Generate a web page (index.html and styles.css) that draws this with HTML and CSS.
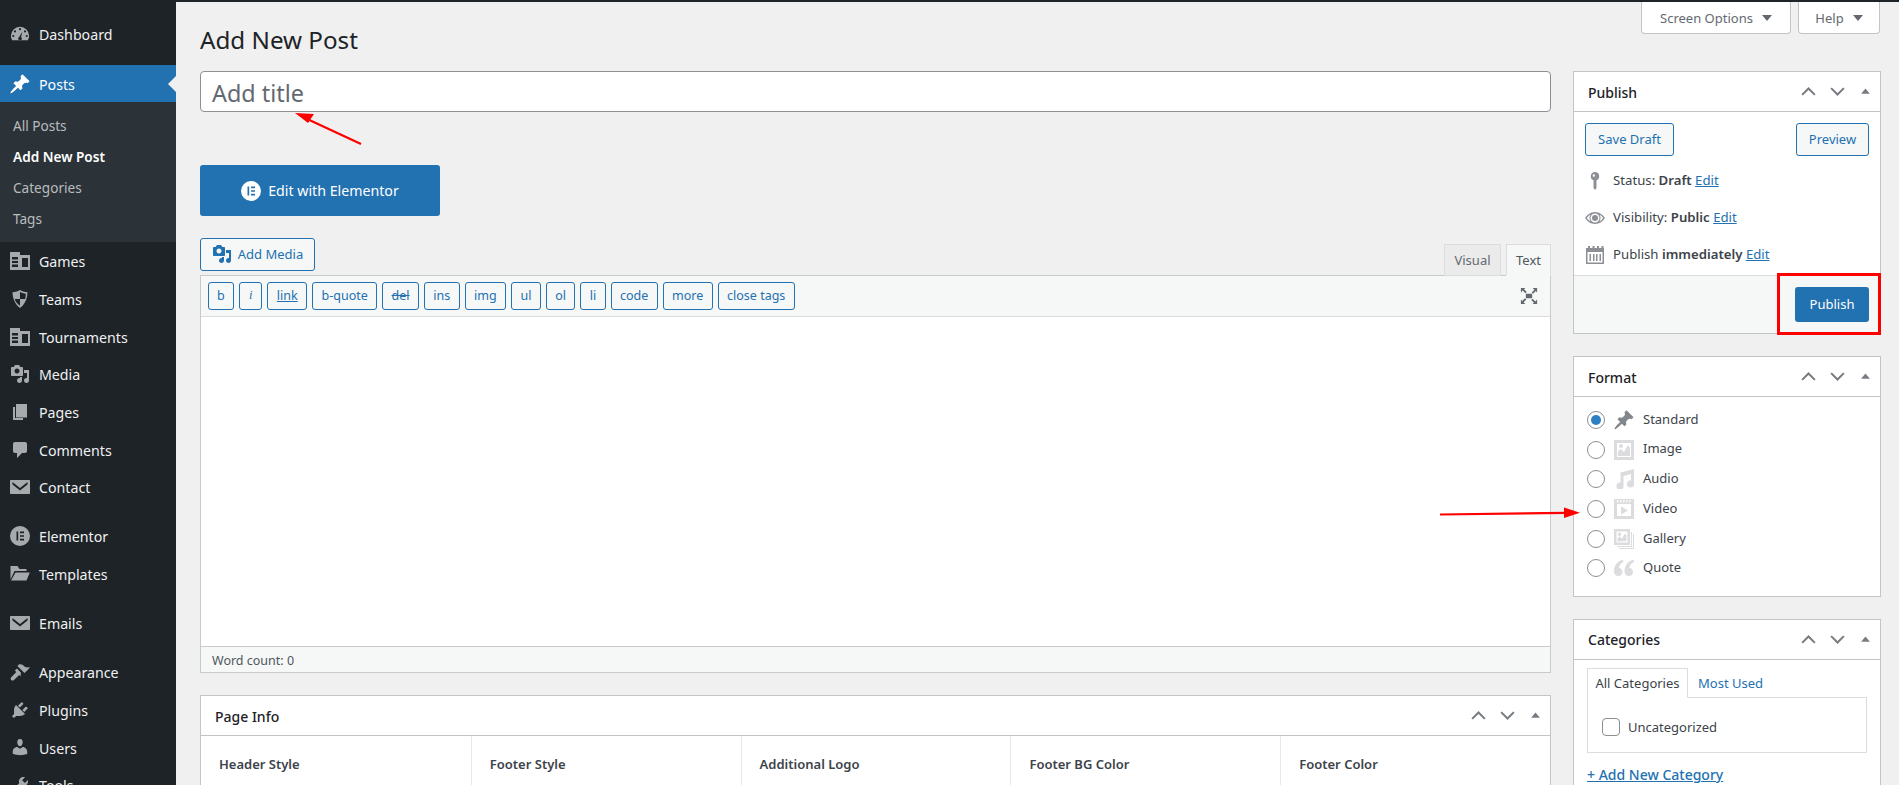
FILE: index.html
```html
<!DOCTYPE html>
<html lang="en">
<head>
<meta charset="utf-8">
<title>Add New Post</title>
<link rel="stylesheet" href="styles.css">
</head>
<body>
<svg class="defs" width="0" height="0" aria-hidden="true">
  <symbol id="i-dash" viewBox="-1 0 22 20"><path fill-rule="evenodd" d="M10 2a10 10 0 0 0-10 10c0 2 .6 3.700 1.500 5h17c.9-1.300 1.500-3 1.500-5A10 10 0 0 0 10 2zM10 3.500a1.200 1.200 0 1 1 0 2.400a1.200 1.200 0 0 1 0-2.400zM4.500 6a1.200 1.200 0 1 1 0 2.400a1.200 1.200 0 0 1 0-2.400zM2.600 11a1.200 1.200 0 1 1 0 2.400a1.200 1.200 0 0 1 0-2.400zM17.400 11a1.200 1.200 0 1 1 0 2.400a1.200 1.200 0 0 1 0-2.400zM15.500 6a1.200 1.200 0 1 1 0 2.400a1.200 1.200 0 0 1 0-2.400zM12.600 7.500l-1.400 6a2 2 0 1 1-2.100-.1z"/></symbol>
  <symbol id="i-pin" viewBox="1 1 18 18"><path d="M10.440 3.020l1.820-1.820 6.360 6.350-1.830 1.820c-1.050-.68-2.480-.57-3.410.36l-.75.75c-.92.93-1.040 2.350-.35 3.410l-1.830 1.820-2.410-2.410-2.800 2.790c-.42.42-3.380 2.710-3.800 2.290s1.860-3.390 2.280-3.810l2.790-2.790L4.100 9.360l1.830-1.820c1.050.69 2.480.57 3.400-.36l.75-.75c.93-.92 1.050-2.350.36-3.410z"/></symbol>
  <symbol id="i-news" viewBox="0 0 20 20"><path fill-rule="evenodd" d="M0 1h10v3h10v15H0zM2 6v2.500h6V6zM2 10v2h6v-2zM2 13.500V16h6v-2.500zM12 7v9h6V7z"/></symbol>
  <symbol id="i-shield" viewBox="0 0 20 20"><path d="M10 1s3 2 7.500 2.200C17.500 14 10 19 10 19S2.500 14 2.500 3.200C7 3 10 1 10 1zm0 9H4.800c.6 2.800 2.500 5 5.200 6.800V10zm0 0h5.200c.4-1.600.6-3.200.6-5.300C13.500 4.500 11.500 3.800 10 3v7z"/></symbol>
  <symbol id="i-media" viewBox="0 0 20 20"><path d="M13 11V4c0-.55-.45-1-1-1h-1.670L9 1H5L3.670 3H2c-.55 0-1 .45-1 1v7c0 .55.45 1 1 1h10c.55 0 1-.45 1-1zM7 4.500c1.380 0 2.500 1.120 2.500 2.500S8.380 9.500 7 9.500 4.500 8.380 4.500 7 5.620 4.500 7 4.500zM14 6h5v10.500c0 1.380-1.120 2.500-2.500 2.500S14 17.880 14 16.500s1.120-2.500 2.500-2.500c.17 0 .34.02.5.05V9h-3V6zm-4 8.050V13h2v3.500c0 1.380-1.120 2.500-2.500 2.500S7 17.880 7 16.500 8.120 14 9.500 14c.17 0 .34.02.5.05z"/></symbol>
  <symbol id="i-pages" viewBox="0 0 20 20"><path d="M6 15V2h11v13.500H6zm-1 1h8v2H3V5h2v11z"/></symbol>
  <symbol id="i-comment" viewBox="0 0 20 20"><path d="M5 2h10c1.100 0 2 .9 2 2v7c0 1.100-.9 2-2 2h-3l-5 5v-5H5c-1.100 0-2-.9-2-2V4c0-1.100.9-2 2-2z"/></symbol>
  <symbol id="i-mail" viewBox="0 0 20 20"><path fill-rule="evenodd" d="M1 3h18c.5 0 1 .4 1 1v12c0 .6-.5 1-1 1H1c-.5 0-1-.4-1-1V4c0-.6.5-1 1-1zM2.500 5 10 11l7.500-6v2.500L10 13.500 2.500 7.500z"/></symbol>
  <symbol id="i-el" viewBox="0 0 20 20"><path fill-rule="evenodd" d="M10 0a10 10 0 1 0 0 20a10 10 0 0 0 0-20zM6.500 5.500h1.700v9H6.500zM10 5.500h4v1.700h-4zM10 9.150h4v1.700h-4zM10 12.800h4v1.700h-4z"/></symbol>
  <symbol id="i-folder" viewBox="0 0 20 20"><path d="M.5 15.500V2h7l2 3h7v2H4.500zM5.500 8.500h14.300l-3.300 8H1z"/></symbol>
  <symbol id="i-brush" viewBox="0 0 20 20"><path d="M14.480 11.060L7.410 3.990l1.500-1.500c.5-.56 2.300-.47 3.590.32 1.280.79 1.830 1.910 3 2.300 1.400.5 3.200.4 4.300-.4-.5 2-2.800 3.800-3.800 4.850zM10.830 10.420l-3.900-3.900-2.100 2.100 1.500 1.500-5.100 5.100c-.8.8-.8 2 0 2.800s2 .8 2.800 0l5.100-5.100 1.500 1.500z"/></symbol>
  <symbol id="i-plug" viewBox="0 0 20 20"><path d="M13.110 4.360L9.870 7.600 8 5.730l3.240-3.240c.35-.34 1.050-.2 1.560.32.52.51.66 1.210.31 1.550zm-8 1.770l.91-1.120 9.010 9.010-1.190.84c-.71.71-2.630 1.160-3.820 1.160H6.140L4.900 17.260c-.59.59-1.540.59-2.120 0-.59-.58-.59-1.530 0-2.120l1.240-1.240v-3.880c0-1.130.4-3.190 1.090-3.890zm7.260 3.970l3.240-3.240c.34-.35 1.040-.21 1.550.31.52.51.66 1.210.31 1.550l-3.240 3.250z"/></symbol>
  <symbol id="i-user" viewBox="0 0 20 20"><path d="M10 9.250c-2.270 0-2.730-3.440-2.730-3.440C7 4.020 7.820 2 9.970 2c2.160 0 2.980 2.020 2.710 3.810 0 0-.41 3.440-2.680 3.440zm0 2.570L12.720 10c2.390 0 4.520 2.330 4.520 4.530v2.490s-3.650 1.130-7.240 1.130c-3.650 0-7.240-1.130-7.240-1.130v-2.490c0-2.250 1.940-4.480 4.470-4.480z"/></symbol>
  <symbol id="i-tool" viewBox="0 0 20 20"><path d="M16.680 9.770c-1.340 1.340-3.300 1.670-4.950.99l-5.410 6.520c-.99.99-2.590.99-3.580 0s-.99-2.590 0-3.570l6.520-5.420c-.68-1.650-.35-3.610.99-4.950 1.280-1.280 3.120-1.620 4.720-1.060l-2.890 2.890 2.820 2.820 2.860-2.870c.53 1.580.18 3.390-1.080 4.650z"/></symbol>
  <symbol id="i-up" viewBox="0 0 20 20"><path d="M2.500 14 10 6.500 17.500 14" fill="none" stroke="currentColor" stroke-width="2.400"/></symbol>
  <symbol id="i-down" viewBox="0 0 20 20"><path d="M2.500 6 10 13.500 17.500 6" fill="none" stroke="currentColor" stroke-width="2.400"/></symbol>
  <symbol id="i-tri" viewBox="0 0 20 20"><path d="M10 4.500 18 14H2z"/></symbol>
  <symbol id="i-key" viewBox="0 0 20 20"><path d="M10 1a4.300 4.300 0 0 1 1.500 8.300V17l-1.500 2-1.500-2V9.300A4.300 4.300 0 0 1 10 1zM8.800 3.300a1.200 1.200 0 1 0 0 2.400a1.200 1.200 0 0 0 0-2.400z" fill-rule="evenodd"/></symbol>
  <symbol id="i-eye" viewBox="0 0 20 20"><path fill-rule="evenodd" d="M10 4c4.500 0 8 3 10 6-2 3-5.500 6-10 6S2 13 0 10c2-3 5.500-6 10-6zM10 5.500a4.500 4.500 0 1 0 0 9a4.500 4.500 0 0 0 0-9zM10 7a3 3 0 1 1 0 6a3 3 0 0 1 0-6zM1.800 10c1 1.400 2.300 2.600 3.800 3.400A6 6 0 0 1 5.600 6.600C4.100 7.400 2.800 8.600 1.800 10zM18.200 10c-1-1.400-2.300-2.600-3.800-3.400a6 6 0 0 1 0 6.800c1.500-.8 2.800-2 3.800-3.400z"/></symbol>
  <symbol id="i-cal" viewBox="0 0 20 20"><path fill-rule="evenodd" d="M1 3h2V1h2v2h2.500V1h2v2H12V1h2v2h2.500V1h2v2h.5v16H1zM2.500 7v10.500h15V7zM4.500 9H6v7H4.500zM8 9h1.500v7H8zM11 9h1.500v7H11zM14.500 9H16v7h-1.500z"/></symbol>
  <symbol id="i-image" viewBox="0 0 20 20"><path fill-rule="evenodd" d="M0 0h20v20H0zM3 3v14h14V3zM4 16v-5l3-2 3 3 4-7 2 3v8zM7 4a2 2 0 1 1 0 4a2 2 0 0 1 0-4z"/></symbol>
  <symbol id="i-audio" viewBox="0 0 20 20"><path d="M6.500 3.500 20 0v15a3.500 3.500 0 1 1-3-3.400V5L9.500 7V17a3.500 3.500 0 1 1-3-3.400z"/></symbol>
  <symbol id="i-video" viewBox="0 0 20 20"><path fill-rule="evenodd" d="M0 0h20v20H0zM3 5v12h14V5zM3.500 1 3 3.500h1.300L4.800 1zM6.500 1 6 3.500h1.300L7.800 1zM9.500 1 9 3.500h1.300l.5-2.500zM12.500 1 12 3.500h1.300l.5-2.500zM15.500 1 15 3.500h1.300l.5-2.500zM7 7.500l7 4-7 4z"/></symbol>
  <symbol id="i-gallery" viewBox="0 0 20 20"><path fill-rule="evenodd" d="M0 0h16v16H0zM2.500 2.500v11h11v-11zM3.500 12.500V9l2-1.500 2.500 2 3-5 1.500 2v5.500zM5.500 3.500a1.700 1.700 0 1 1 0 3.400a1.700 1.700 0 0 1 0-3.400zM17 3h1v15H3v-1h14zM19 5h1v15H5v-1h14z"/></symbol>
  <symbol id="i-quote" viewBox="0 0 20 20"><path d="M9 1.500C4.500 3 0 6.500 0 13c0 3 1.700 5 4.300 5 2.400 0 4.200-1.800 4.200-4.100 0-2.200-1.500-3.800-3.700-3.900.3-2.600 2-4.700 4.700-6zM19.500 1.500C15 3 10.500 6.500 10.500 13c0 3 1.700 5 4.300 5 2.400 0 4.200-1.800 4.200-4.100 0-2.200-1.500-3.800-3.700-3.900.3-2.600 2-4.700 4.700-6z"/></symbol>
  <symbol id="i-full" viewBox="0 0 20 20"><path d="M1 1h5L4.500 2.500 7.500 5.500 6 7 3 4 1 6zM19 1v5L17.500 4.500 14.500 7.500 13 6l3-3-2-2zM1 19v-5l1.500 1.500L5.500 12.500 7 14l-3 3 2 2zM19 19h-5l1.500-1.500-3-3L14 13l3 3 2-2zM6.500 7.500h7v5h-7z"/></symbol>
</svg>

<div class="topbar"></div>
<div class="layout">
  <nav class="sidebar">
    <a class="mi mt13"><svg class="mic"><use href="#i-dash"/></svg>Dashboard</a>
    <a class="mi mi-current mt12"><svg class="mic"><use href="#i-pin"/></svg>Posts</a>
    <div class="submenu">
      <a class="si">All Posts</a>
      <a class="si si-current">Add New Post</a>
      <a class="si">Categories</a>
      <a class="si">Tags</a>
    </div>
    <a class="mi"><svg class="mic"><use href="#i-news"/></svg>Games</a>
    <a class="mi"><svg class="mic"><use href="#i-shield"/></svg>Teams</a>
    <a class="mi"><svg class="mic"><use href="#i-news"/></svg>Tournaments</a>
    <a class="mi"><svg class="mic"><use href="#i-media"/></svg>Media</a>
    <a class="mi"><svg class="mic"><use href="#i-pages"/></svg>Pages</a>
    <a class="mi"><svg class="mic"><use href="#i-comment"/></svg>Comments</a>
    <a class="mi"><svg class="mic"><use href="#i-mail"/></svg>Contact</a>
    <a class="mi mt11"><svg class="mic"><use href="#i-el"/></svg>Elementor</a>
    <a class="mi"><svg class="mic"><use href="#i-folder"/></svg>Templates</a>
    <a class="mi mt12"><svg class="mic"><use href="#i-mail"/></svg>Emails</a>
    <a class="mi mt11"><svg class="mic"><use href="#i-brush"/></svg>Appearance</a>
    <a class="mi"><svg class="mic"><use href="#i-plug"/></svg>Plugins</a>
    <a class="mi"><svg class="mic"><use href="#i-user"/></svg>Users</a>
    <a class="mi"><svg class="mic"><use href="#i-tool"/></svg>Tools</a>
  </nav>

  <main class="main">
    <header class="head">
      <h1 class="page-title">Add New Post</h1>
      <div class="screen-tabs">
        <button class="screen-tab screen-options">Screen Options<span class="caret"></span></button>
        <button class="screen-tab screen-help">Help<span class="caret"></span></button>
      </div>
    </header>

    <div class="columns">
      <section class="post-body">
        <div class="title-input">Add title</div>
        <a class="elementor-btn"><svg class="el-ic"><use href="#i-el"/></svg>Edit with Elementor</a>
        <div class="media-row">
          <button class="btn add-media"><svg class="am-ic"><use href="#i-media"/></svg>Add Media</button>
          <div class="editor-tabs">
            <span class="etab">Visual</span>
            <span class="etab etab-active">Text</span>
          </div>
        </div>
        <div class="editor">
          <div class="toolbar">
            <button class="btn qt">b</button>
            <button class="btn qt qt-i">i</button>
            <button class="btn qt qt-u">link</button>
            <button class="btn qt">b-quote</button>
            <button class="btn qt qt-s">del</button>
            <button class="btn qt">ins</button>
            <button class="btn qt">img</button>
            <button class="btn qt">ul</button>
            <button class="btn qt">ol</button>
            <button class="btn qt">li</button>
            <button class="btn qt">code</button>
            <button class="btn qt">more</button>
            <button class="btn qt">close tags</button>
            <svg class="full-ic"><use href="#i-full"/></svg>
          </div>
          <div class="editor-area"></div>
          <div class="word-count">Word count: 0</div>
        </div>

        <div class="box page-info">
          <div class="box-head">
            <h2 class="box-title">Page Info</h2>
            <div class="box-ctrl"><svg><use href="#i-up"/></svg><svg><use href="#i-down"/></svg><svg class="tri"><use href="#i-tri"/></svg></div>
          </div>
          <div class="info-grid">
            <div class="info-cell">Header Style</div>
            <div class="info-cell">Footer Style</div>
            <div class="info-cell">Additional Logo</div>
            <div class="info-cell">Footer BG Color</div>
            <div class="info-cell">Footer Color</div>
          </div>
        </div>
      </section>

      <aside class="side">
        <div class="box box-publish">
          <div class="box-head">
            <h2 class="box-title">Publish</h2>
            <div class="box-ctrl"><svg><use href="#i-up"/></svg><svg><use href="#i-down"/></svg><svg class="tri"><use href="#i-tri"/></svg></div>
          </div>
          <div class="pub-body">
            <div class="pub-actions">
              <button class="btn pub-btn">Save Draft</button>
              <button class="btn pub-btn">Preview</button>
            </div>
            <div class="pub-line"><svg class="pub-ic"><use href="#i-key"/></svg><span>Status: <b>Draft</b> <a class="lnk">Edit</a></span></div>
            <div class="pub-line"><svg class="pub-ic"><use href="#i-eye"/></svg><span>Visibility: <b>Public</b> <a class="lnk">Edit</a></span></div>
            <div class="pub-line"><svg class="pub-ic"><use href="#i-cal"/></svg><span>Publish <b>immediately</b> <a class="lnk">Edit</a></span></div>
          </div>
          <div class="pub-foot"><button class="primary">Publish</button></div>
          <div class="red-box"></div>
        </div>

        <div class="box box-format">
          <div class="box-head">
            <h2 class="box-title">Format</h2>
            <div class="box-ctrl"><svg><use href="#i-up"/></svg><svg><use href="#i-down"/></svg><svg class="tri"><use href="#i-tri"/></svg></div>
          </div>
          <div class="format-list">
            <div class="fmt"><span class="radio radio-on"></span><svg class="fmt-ic fmt-ic-dark"><use href="#i-pin"/></svg><span class="fmt-label">Standard</span></div>
            <div class="fmt"><span class="radio"></span><svg class="fmt-ic"><use href="#i-image"/></svg><span class="fmt-label">Image</span></div>
            <div class="fmt"><span class="radio"></span><svg class="fmt-ic"><use href="#i-audio"/></svg><span class="fmt-label">Audio</span></div>
            <div class="fmt"><span class="radio"></span><svg class="fmt-ic"><use href="#i-video"/></svg><span class="fmt-label">Video</span></div>
            <div class="fmt"><span class="radio"></span><svg class="fmt-ic"><use href="#i-gallery"/></svg><span class="fmt-label">Gallery</span></div>
            <div class="fmt"><span class="radio"></span><svg class="fmt-ic"><use href="#i-quote"/></svg><span class="fmt-label">Quote</span></div>
          </div>
        </div>

        <div class="box box-cats">
          <div class="box-head">
            <h2 class="box-title">Categories</h2>
            <div class="box-ctrl"><svg><use href="#i-up"/></svg><svg><use href="#i-down"/></svg><svg class="tri"><use href="#i-tri"/></svg></div>
          </div>
          <div class="cats-body">
            <div class="cat-tabs"><span class="cat-tab cat-tab-on">All Categories</span><a class="cat-tab-link">Most Used</a></div>
            <div class="cat-panel"><span class="check"></span>Uncategorized</div>
            <a class="lnk add-cat">+ Add New Category</a>
          </div>
        </div>
      </aside>
    </div>
  </main>
</div>

<svg class="annot" viewBox="0 0 1899 785" aria-hidden="true">
  <path class="annot-line" d="M361 144 305 118"/>
  <path class="annot-head" d="M295 113 314 114 308 123z"/>
  <path class="annot-line" d="M1440 514.500 1566 512.800"/>
  <path class="annot-head" d="M1580 512.700 1564 507.500 1564 518z"/>
</svg>
</body>
</html>
```

FILE: styles.css
```css
* { box-sizing: border-box; }
html, body { margin: 0; height: 785px; overflow: hidden; }
body {
  position: relative;
  background: #f0f0f0;
  color: #3c434a;
  font-family: "Noto Sans", "Liberation Sans", sans-serif;
  font-size: 13px;
  line-height: 1.4;
}
button { font-family: inherit; cursor: pointer; }
.defs { position: absolute; }
.topbar { height: 2px; background: #1d2327; }
.layout { display: flex; height: 783px; overflow: hidden; }

/* Sidebar */
.sidebar { width: 176px; flex: none; background: #1d2327; overflow: hidden; }
.mi {
  position: relative;
  display: flex;
  align-items: center;
  height: 37.7px;
  padding: 2px 0 0 10px;
  gap: 9px;
  color: #f0f0f1;
  font-size: 14.2px;
}
.mic { width: 20px; height: 20px; flex: none; fill: #a7aaad; margin-top: -2px; }
.mt11 { margin-top: 11px; }
.mt12 { margin-top: 12px; }
.mt13 { margin-top: 13px; }
.mi-current { background: #2271b1; color: #fff; }
.mi-current .mic { fill: #fff; }
.mi-current::after {
  content: "";
  position: absolute;
  right: 0;
  top: 11px;
  border: 8px solid transparent;
  border-right-color: #f0f0f0;
  border-left-width: 0;
}
.submenu { background: #2c3338; padding: 7px 0 9px; }
.si {
  display: flex;
  align-items: center;
  height: 31px;
  padding: 1px 0 0 13px;
  color: #b9bcbf;
  font-size: 13.6px;
}
.si-current { color: #fff; font-weight: 600; }

/* Main */
.main { flex: 1; min-width: 0; padding: 0 19px 0 24px; }
.head { display: flex; justify-content: space-between; align-items: flex-start; height: 69px; }
.page-title {
  margin: 21px 0 0;
  font-size: 24.2px;
  line-height: 34px;
  font-weight: 400;
  color: #1d2327;
}
.screen-tabs { display: flex; gap: 7px; }
.screen-tab {
  display: flex;
  align-items: center;
  justify-content: center;
  gap: 9px;
  height: 32px;
  background: #fff;
  border: 1px solid #c3c4c7;
  border-top: 0;
  border-radius: 0 0 4px 4px;
  color: #646970;
  font-size: 13px;
  padding: 0;
}
.screen-options { width: 150px; }
.screen-help { width: 82px; }
.caret {
  width: 0;
  height: 0;
  border: 5px solid transparent;
  border-top: 6px solid #646970;
  border-bottom: 0;
}

.columns { display: flex; gap: 22px; align-items: flex-start; }
.post-body { width: 1351px; flex: none; }
.side { width: 308px; flex: none; display: flex; flex-direction: column; gap: 22px; }

.title-input {
  height: 41px;
  background: #fff;
  border: 1px solid #8c8f94;
  border-radius: 4px;
  padding: 2px 11px 0;
  font-size: 23.4px;
  line-height: 38px;
  color: #646970;
}
.elementor-btn {
  display: flex;
  align-items: center;
  justify-content: center;
  gap: 7px;
  width: 240px;
  height: 51px;
  margin-top: 53px;
  background: #2271b1;
  border-radius: 3px;
  color: #fff;
  font-size: 14.2px;
}
.el-ic { width: 20px; height: 20px; fill: #fff; }

.btn {
  display: inline-flex;
  align-items: center;
  justify-content: center;
  background: #f6f7f7;
  border: 1px solid #2271b1;
  border-radius: 3px;
  color: #2271b1;
  font-size: 13px;
  padding: 0 0 2px;
}
.media-row {
  display: flex;
  justify-content: space-between;
  align-items: flex-end;
  margin-top: 22px;
  height: 37px;
}
.add-media {
  align-self: flex-start;
  width: 115px;
  height: 33px;
  gap: 6px;
}
.am-ic { width: 20px; height: 20px; fill: #2271b1; }
.editor-tabs { display: flex; gap: 5px; margin-bottom: -1px; position: relative; }
.etab {
  display: flex;
  align-items: center;
  justify-content: center;
  width: 57px;
  height: 32px;
  background: #ebebeb;
  border: 1px solid #dcdcde;
  color: #646970;
  font-size: 13px;
}
.etab-active { width: 45px; background: #f6f7f7; border-bottom-color: #f6f7f7; color: #50575e; }
.editor { background: #fff; border: 1px solid #c9cacc; }
.toolbar {
  display: flex;
  align-items: center;
  height: 41px;
  padding: 0 0 0 6.500px;
  gap: 5px;
  background: #f6f7f7;
  border-bottom: 1px solid #dcdcde;
}
.qt { height: 28px; padding: 0 8.400px 2px; font-size: 12.500px; }
.qt-i { font-style: italic; font-family: "Liberation Serif", serif; padding: 0 9px 2px; }
.qt-u { text-decoration: underline; }
.qt-s { text-decoration: line-through; }
.full-ic { width: 18px; height: 18px; margin-left: auto; margin-right: 12px; fill: #646970; }
.editor-area { height: 329px; background: #fff; }
.word-count {
  height: 26px;
  padding: 2px 0 0 11px;
  background: #f6f7f7;
  border-top: 1px solid #c9cacc;
  font-size: 12.500px;
  line-height: 24px;
  color: #50575e;
}

/* Boxes */
.box { position: relative; background: #fff; border: 1px solid #c3c4c7; }
.box-head {
  display: flex;
  align-items: center;
  justify-content: space-between;
  height: 40px;
  padding: 0 9px 0 14px;
  border-bottom: 1px solid #c3c4c7;
}
.box-title { margin: 2px 0 0; font-size: 14px; font-weight: 500; color: #1d2327; }
.box-cats .box-title { margin-top: 0; }
.box-ctrl { display: flex; gap: 12px; align-items: center; color: #787c82; }
.box-ctrl svg { width: 17px; height: 17px; display: block; fill: #787c82; }
.box-ctrl .tri { width: 11px; height: 11px; margin-left: 2px; }
.page-info { margin-top: 22px; }
.info-grid { display: grid; grid-template-columns: repeat(5, 1fr); }
.info-cell {
  height: 70px;
  padding: 19px 18px;
  border-left: 1px solid #e8e8e8;
  font-size: 13px;
  font-weight: 600;
  color: #3c434a;
}
.info-cell:first-child { border-left: 0; }

/* Publish */
.box-publish { height: 263px; display: flex; flex-direction: column; }
.pub-body { flex: 1; padding: 11px 11px 0; }
.pub-actions { display: flex; justify-content: space-between; margin-bottom: 6px; }
.pub-btn { height: 33px; width: 89px; }
.pub-btn + .pub-btn { width: 73px; }
.pub-line { display: flex; align-items: center; gap: 8px; height: 37px; font-size: 13.2px; }
.pub-ic { width: 20px; height: 20px; flex: none; fill: #8c8f94; }
.pub-line b { font-weight: 600; }
.lnk { color: #2271b1; text-decoration: underline; }
.pub-foot {
  height: 58px;
  display: flex;
  align-items: center;
  justify-content: flex-end;
  padding: 0 11px 0 0;
  background: #f6f7f7;
  border-top: 1px solid #dcdcde;
}
.primary {
  width: 74px;
  height: 35px;
  background: #2271b1;
  border: 0;
  border-radius: 3px;
  color: #fff;
  font-size: 13px;
  padding: 0 0 2px;
}
.red-box {
  position: absolute;
  right: -1px;
  bottom: -2px;
  width: 104px;
  height: 62px;
  border: 3px solid #f00;
}

/* Format */
.box-format { height: 241px; }
.format-list { padding: 8px 0 0 13px; }
.fmt { display: flex; align-items: center; height: 29.700px; font-size: 13px; }
.fmt-label { margin-top: -2px; }
.radio {
  width: 18px;
  height: 18px;
  flex: none;
  margin-right: 9px;
  background: #fff;
  border: 1px solid #8c8f94;
  border-radius: 50%;
}
.radio-on { border-color: #8c8f94; position: relative; }
.radio-on::after {
  content: "";
  position: absolute;
  left: 3px;
  top: 3px;
  width: 10px;
  height: 10px;
  background: #2f7fc4;
  border-radius: 50%;
}
.fmt-ic { width: 20px; height: 20px; flex: none; margin-right: 9px; fill: #dcdcde; }
.fmt-ic-dark { fill: #82878c; }

/* Categories */
.box-cats { height: 300px; }
.cats-body { padding: 8px 13px; }
.cat-tabs { display: flex; align-items: flex-end; height: 30px; margin-bottom: -1px; position: relative; }
.cat-tab {
  display: flex;
  align-items: center;
  justify-content: center;
  width: 101px;
  height: 30px;
  background: #fff;
  border: 1px solid #dcdcde;
  border-bottom-color: #fff;
  color: #3c434a;
  font-size: 13px;
}
.cat-tab-link { display: flex; align-items: center; height: 30px; padding-left: 10px; color: #2271b1; font-size: 13px; }
.cat-panel {
  display: flex;
  align-items: center;
  gap: 8px;
  height: 56px;
  width: 280px;
  padding: 4px 0 0 14px;
  border: 1px solid #dcdcde;
  font-size: 13px;
}
.check {
  width: 18px;
  height: 18px;
  background: #fff;
  border: 1px solid #8c8f94;
  border-radius: 4px;
}
.add-cat { display: block; margin-top: 12px; font-size: 14px; font-weight: 500; }

/* Annotations */
.annot { position: absolute; left: 0; top: 0; width: 1899px; height: 785px; pointer-events: none; }
.annot-line { fill: none; stroke: #f00; stroke-width: 2.200; }
.annot-head { fill: #f00; }
```
